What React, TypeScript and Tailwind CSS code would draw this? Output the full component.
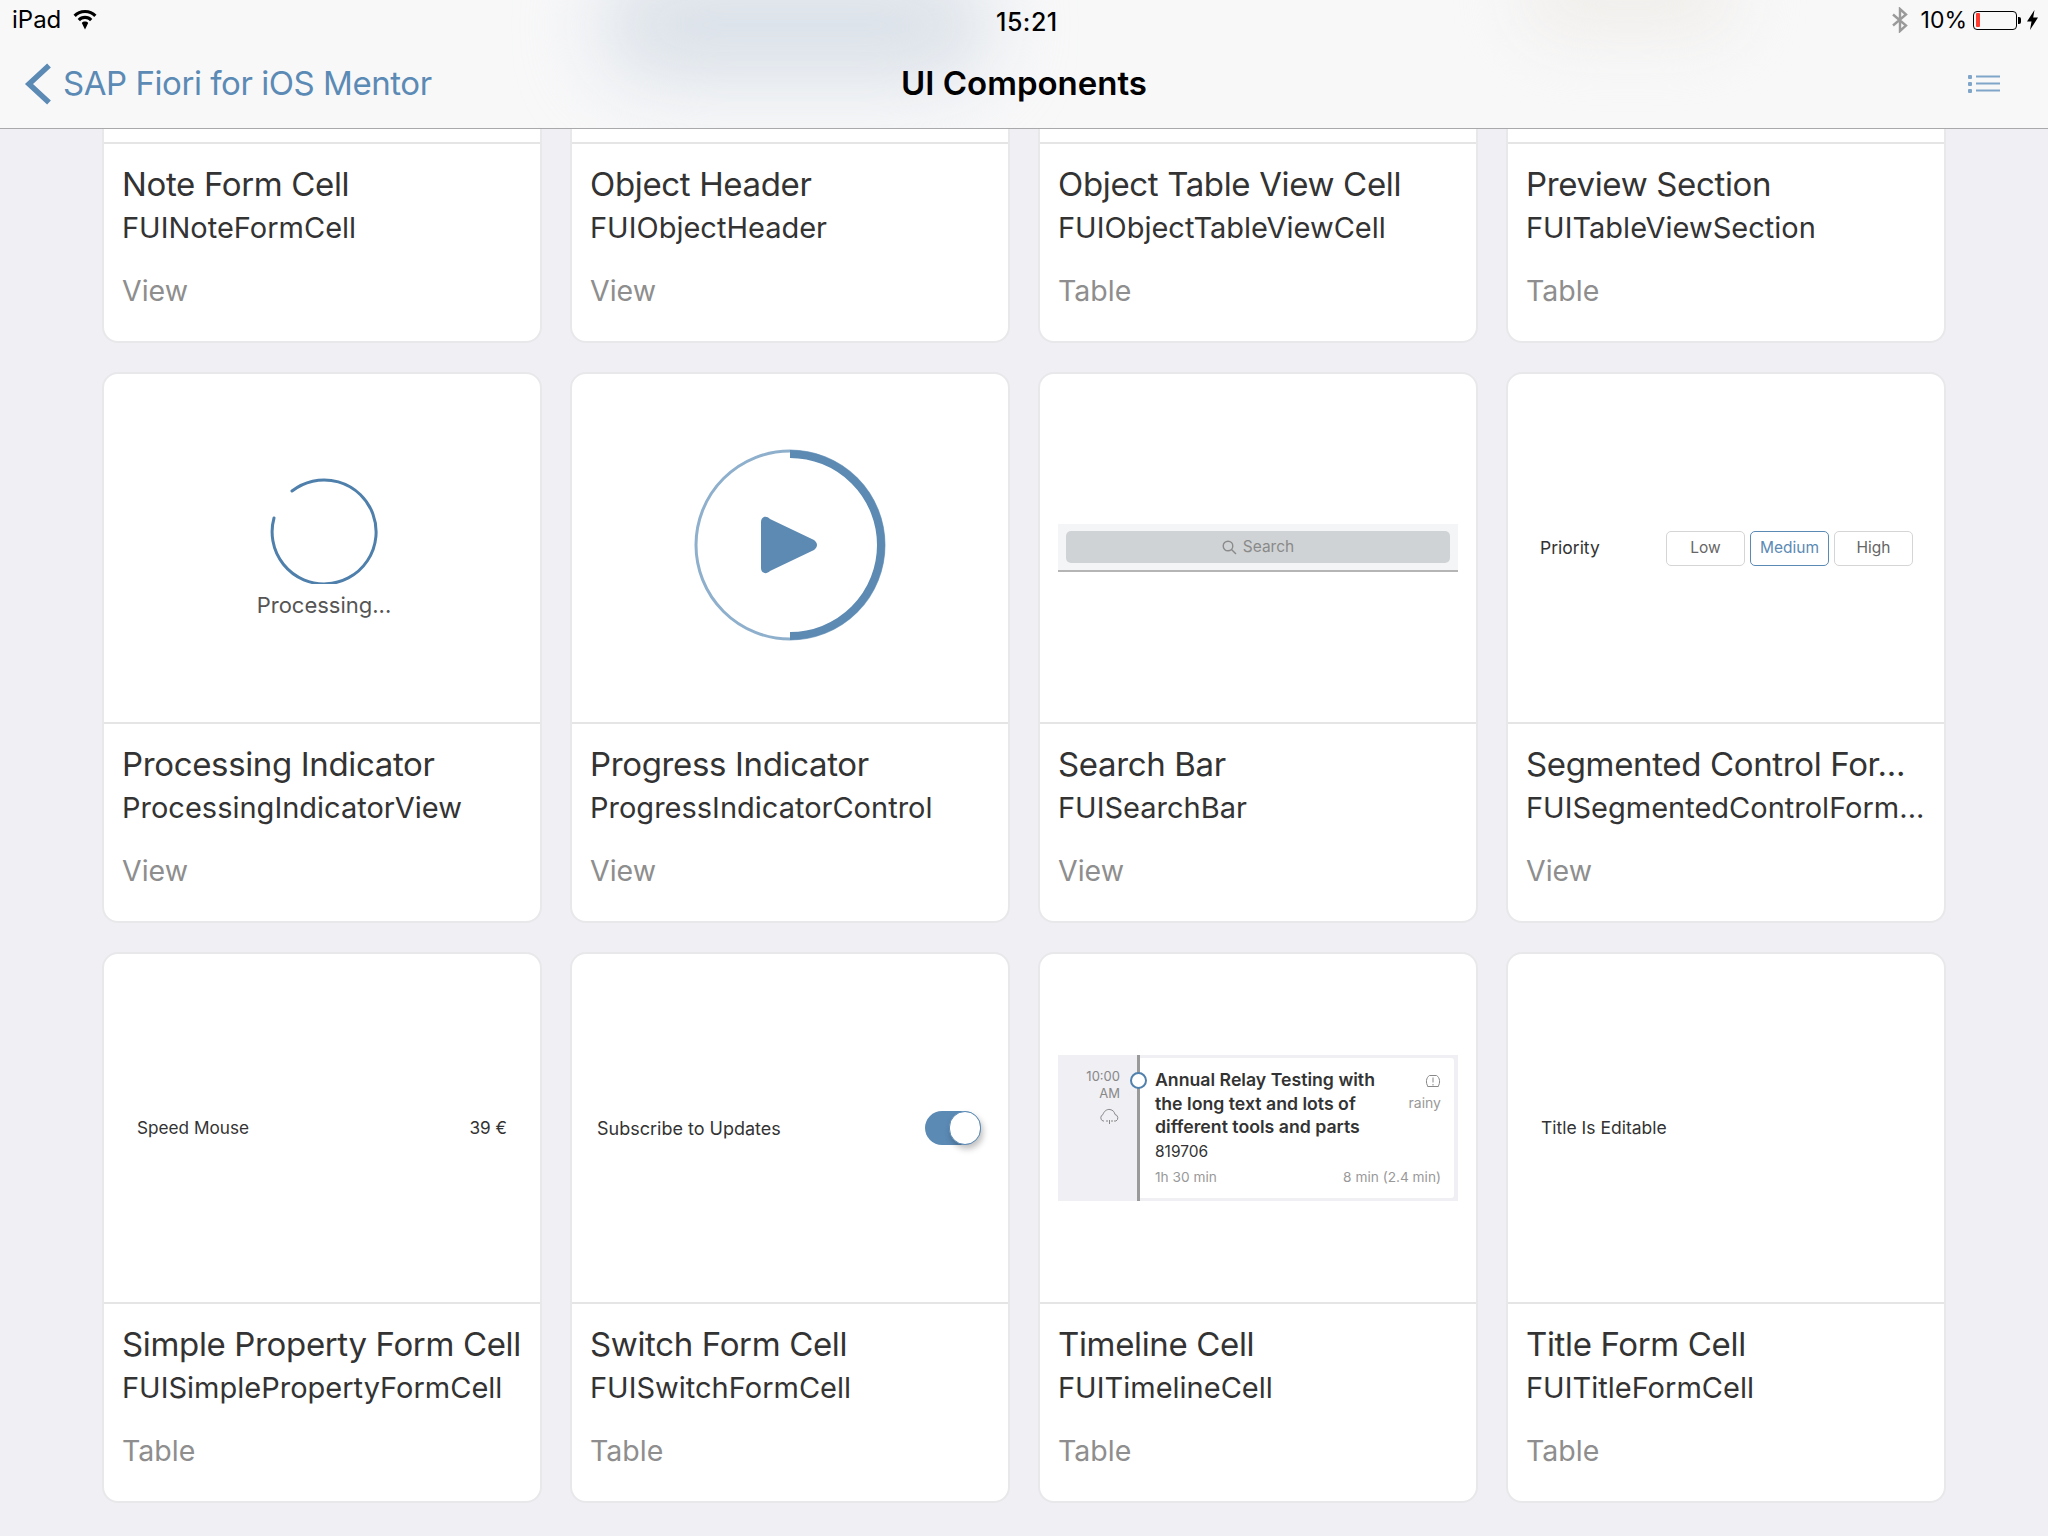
import type { ReactNode } from 'react';

type Item = {
  title: string;
  name: string;
  kind: string;
  preview?: ReactNode;
};

function Wifi() {
  return (
    <svg width="24" height="20" viewBox="0 0 24 20" className="text-black" fill="currentColor">
      <path d="M12 0C7.4 0 3.300 1.800 0.500 4.700L2.800 7C5.100 4.600 8.400 3.100 12 3.100C15.600 3.100 18.900 4.600 21.200 7L23.500 4.700C20.700 1.800 16.600 0 12 0Z" />
      <path d="M12 5.800C9.100 5.800 6.500 7 4.700 8.900L7 11.200C8.300 9.900 10.100 9 12 9C13.900 9 15.700 9.900 17 11.200L19.300 8.900C17.500 7 14.900 5.800 12 5.800Z" />
      <path d="M12 11.600C10.700 11.600 9.600 12.100 8.800 12.900L12 19.500L15.200 12.900C14.400 12.100 13.300 11.600 12 11.600Z" />
    </svg>
  );
}

function StatusBar() {
  return (
    <div className="relative flex h-[40px] items-center justify-between pl-[12px] pr-[10px] text-[24px] text-black">
      <div className="flex items-center gap-[12px]">
        <span>iPad</span>
        <Wifi />
      </div>
      <span className="absolute left-[996px] top-[4px] text-[25px] font-medium tracking-[0.5px]">15:21</span>
      <div className="flex items-center">
        <svg width="16" height="26" viewBox="0 0 16 26" fill="none" stroke="#9a9a9a" strokeWidth="2.400" className="mr-[13px]">
          <path d="M1 7.500 L14 18.500 L8 24 V2 L14 7.500 L1 18.500" />
        </svg>
        <span className="mr-[6px] text-[23px]">10%</span>
        <div className="flex h-[19px] w-[44px] items-stretch rounded-[4px] border-[1.500px] border-black p-[1.500px]">
          <div className="w-[4px] rounded-[1px] bg-[#ff3b30]" />
        </div>
        <div className="ml-[1px] h-[7px] w-[3px] rounded-r-[2px] bg-black" />
        <svg width="11" height="20" viewBox="0 0 11 20" fill="black" className="ml-[6px]">
          <path d="M7.500 0L0 11.500H4.500L3 20L11 7.500H6.200L7.500 0Z" />
        </svg>
      </div>
    </div>
  );
}

function NavBar() {
  return (
    <div className="relative grid h-[88px] grid-cols-[1fr_auto_1fr] items-center">
      <div className="flex items-center pl-[24px] text-[#5b8ab5]">
        <svg width="28" height="42" viewBox="0 0 28 42" fill="none" stroke="currentColor" strokeWidth="5.500" className="mr-[11px]">
          <path d="M25 2.500L5 21L25 39.500" />
        </svg>
        <span className="text-[33px] tracking-[-0.45px] whitespace-nowrap">SAP Fiori for iOS Mentor</span>
      </div>
      <div className="text-[33px] font-semibold text-black">UI Components</div>
      <div className="flex justify-end pr-[48px]">
        <svg width="32" height="20" viewBox="0 0 32 20" fill="#7fa5c8">
          <rect x="0" y="1" width="4" height="4" rx="1" />
          <rect x="0" y="8" width="4" height="4" rx="1" />
          <rect x="0" y="15" width="4" height="4" rx="1" />
          <rect x="8" y="1.500" width="24" height="2" />
          <rect x="8" y="8.500" width="24" height="2" />
          <rect x="8" y="15.500" width="24" height="2" />
        </svg>
      </div>
    </div>
  );
}

function Processing() {
  return (
    <div className="flex h-full flex-col items-center pl-[4px] pt-[102px]">
      <svg width="108" height="108" viewBox="0 0 108 108" fill="none" stroke="#4f7fab" strokeWidth="3">
        <path d="M22 15A52 52 0 1 1 4 42" strokeLinecap="round" />
      </svg>
      <span className="mt-[5px] text-[22px] text-[#555]">Processing...</span>
    </div>
  );
}

function Progress() {
  return (
    <div className="flex h-full items-center justify-center pb-[6px]">
      <svg width="194" height="194" viewBox="0 0 194 194" fill="none">
        <circle cx="97" cy="97" r="94" stroke="#8fb0cd" strokeWidth="3" />
        <path d="M97 6A91 91 0 0 1 97 188" stroke="#5d8ab3" strokeWidth="8" />
        <path d="M68 74C68 69 73 67 77 71L121 92C125 95 125 99 121 102L77 123C73 127 68 125 68 120Z" fill="#5d8ab3" />
      </svg>
    </div>
  );
}

function SearchPreview() {
  return (
    <div className="flex h-full items-center px-[18px]">
      <div className="h-[48px] w-full border-b-2 border-[#b5b5b5] bg-[#f4f5f6] px-[8px] pt-[7px]">
        <div className="flex h-[32px] items-center justify-center gap-[6px] rounded-[5px] bg-[#d0d3d5] text-[15.500px] text-[#8a8a8a]">
          <svg width="15" height="15" viewBox="0 0 15 15" fill="none" stroke="#8a8a8a" strokeWidth="1.400">
            <circle cx="6" cy="6" r="4.800" />
            <path d="M9.500 9.500L14 14" />
          </svg>
          <span>Search</span>
        </div>
      </div>
    </div>
  );
}

function Segmented() {
  return (
    <div className="flex h-full items-center justify-between pl-[32px] pr-[31px] text-[17.500px] text-[#333]">
      <span>Priority</span>
      <div className="flex gap-[5px] text-[15.500px]">
        <div className="flex h-[35px] w-[79px] items-center justify-center rounded-[5px] border border-[#d5d5d5] text-[#666]">Low</div>
        <div className="flex h-[35px] w-[79px] items-center justify-center rounded-[5px] border border-[#5b8ab5] text-[#5b8ab5]">Medium</div>
        <div className="flex h-[35px] w-[79px] items-center justify-center rounded-[5px] border border-[#d5d5d5] text-[#666]">High</div>
      </div>
    </div>
  );
}

function SimpleProperty() {
  return (
    <div className="flex h-full items-center justify-between px-[33px] text-[17.200px] text-[#333]">
      <span>Speed Mouse</span>
      <span>39 €</span>
    </div>
  );
}

function SwitchPreview() {
  return (
    <div className="flex h-full items-center justify-between pl-[25px] pr-[27px] text-[18px] text-[#333]">
      <span>Subscribe to Updates</span>
      <div className="flex h-[34px] w-[56px] justify-end rounded-full bg-[#5b8ab5]">
        <div className="h-[34px] w-[32px] rounded-full border border-[#5b8ab5] bg-white shadow-[2px_4px_6px_rgba(0,0,0,0.25)]" />
      </div>
    </div>
  );
}

function Timeline() {
  return (
    <div className="flex h-full items-center px-[18px]">
      <div className="flex h-[146px] w-full bg-[#efeff4]">
        <div className="relative flex w-[82px] flex-col items-end border-r-[3px] border-[#9a9a9a] pr-[17px] pt-[13px] text-[13px] leading-[17px] text-[#888]">
          <span>10:00</span>
          <span>AM</span>
          <svg width="21" height="17" viewBox="0 0 21 17" fill="none" stroke="#888" strokeWidth="1" className="mt-[6px]">
            <path d="M5 13H4A3.500 3.500 0 0 1 4 6.500C5 3 8 1 11 1.500C14 2 15.500 4 16 6.500A3.500 3.500 0 0 1 17 13H15" />
            <path d="M8 12V14M10.500 12V16M13 12V14" />
          </svg>
          <div className="absolute right-[-10px] top-[17px] h-[17px] w-[17px] rounded-full border-[2.500px] border-[#5080ab] bg-white" />
        </div>
        <div className="my-[3px] mr-[4px] flex flex-1 flex-col rounded-r-[3px] bg-white pb-[10px] pl-[15px] pr-[13px] pt-[10px]">
          <div className="flex justify-between">
            <div className="w-[232px] text-[17.700px] font-semibold leading-[23.500px] text-[#333]">
              Annual Relay Testing with the long text and lots of different tools and parts
            </div>
            <div className="flex flex-col items-end text-[14px] text-[#999]">
              <svg width="16" height="14" viewBox="0 0 16 14" fill="none" stroke="#888" strokeWidth="1" className="mt-[6px]">
                <path d="M3 12.500C0.500 9 1 3.500 4.500 1.500H11.500C15 3.500 15.500 9 13 12.500M2.500 12.500H13.500" />
                <path d="M8 3.500V8.500M8 10V11.500" />
              </svg>
              <span className="mt-[4px]">rainy</span>
            </div>
          </div>
          <div className="mt-[3px] text-[15.500px] leading-[20px] text-[#333]">819706</div>
          <div className="mt-auto flex justify-between text-[13.700px] text-[#999]">
            <span>1h 30 min</span>
            <span>8 min (2.4 min)</span>
          </div>
        </div>
      </div>
    </div>
  );
}

function TitleForm() {
  return <div className="flex h-full items-center pl-[33px] text-[17.500px] text-[#333]">Title Is Editable</div>;
}

const items: Item[] = [
  { title: 'Note Form Cell', name: 'FUINoteFormCell', kind: 'View' },
  { title: 'Object Header', name: 'FUIObjectHeader', kind: 'View' },
  { title: 'Object Table View Cell', name: 'FUIObjectTableViewCell', kind: 'Table' },
  { title: 'Preview Section', name: 'FUITableViewSection', kind: 'Table' },
  { title: 'Processing Indicator', name: 'ProcessingIndicatorView', kind: 'View', preview: <Processing /> },
  { title: 'Progress Indicator', name: 'ProgressIndicatorControl', kind: 'View', preview: <Progress /> },
  { title: 'Search Bar', name: 'FUISearchBar', kind: 'View', preview: <SearchPreview /> },
  { title: 'Segmented Control For...', name: 'FUISegmentedControlForm...', kind: 'View', preview: <Segmented /> },
  { title: 'Simple Property Form Cell', name: 'FUISimplePropertyFormCell', kind: 'Table', preview: <SimpleProperty /> },
  { title: 'Switch Form Cell', name: 'FUISwitchFormCell', kind: 'Table', preview: <SwitchPreview /> },
  { title: 'Timeline Cell', name: 'FUITimelineCell', kind: 'Table', preview: <Timeline /> },
  { title: 'Title Form Cell', name: 'FUITitleFormCell', kind: 'Table', preview: <TitleForm /> },
];

function Card({ item }: { item: Item }) {
  return (
    <div className="h-[551px] overflow-hidden rounded-[16px] border-2 border-[#e8e8eb] bg-white">
      <div className="h-[350px] border-b-2 border-[#e5e5e5]">{item.preview}</div>
      <div className="px-[18px] pt-[20px] whitespace-nowrap">
        <div className="text-[33px] leading-[40px] tracking-[-0.35px] text-[#333]">{item.title}</div>
        <div className="mt-[6px] text-[29px] leading-[36px] text-[#333]">{item.name}</div>
        <div className="mt-[27px] text-[28.500px] leading-[36px] text-[#8e8e8e]">{item.kind}</div>
      </div>
    </div>
  );
}

export default function App() {
  return (
    <div className="flex h-[1536px] flex-col overflow-hidden bg-[#efeff4] font-['Inter',sans-serif]">
      <header className="relative z-10 h-[129px] shrink-0 overflow-hidden border-b border-[#a9a9ab] bg-[#f8f8f9]">
        {/* blurred content showing through the bar */}
        <div className="absolute left-[600px] top-[-30px] h-[110px] w-[390px] rounded-full bg-[#d9e0e8] blur-[40px]" />
        <div className="absolute left-[1520px] top-[-50px] h-[90px] w-[220px] rounded-full bg-[#f1efec] blur-[30px]" />
        <StatusBar />
        <NavBar />
      </header>
      <main className="-mt-[337px] grid grid-cols-4 gap-x-[28px] gap-y-[29px] px-[102px]">
        {items.map((item) => (
          <Card key={item.title} item={item} />
        ))}
      </main>
    </div>
  );
}
